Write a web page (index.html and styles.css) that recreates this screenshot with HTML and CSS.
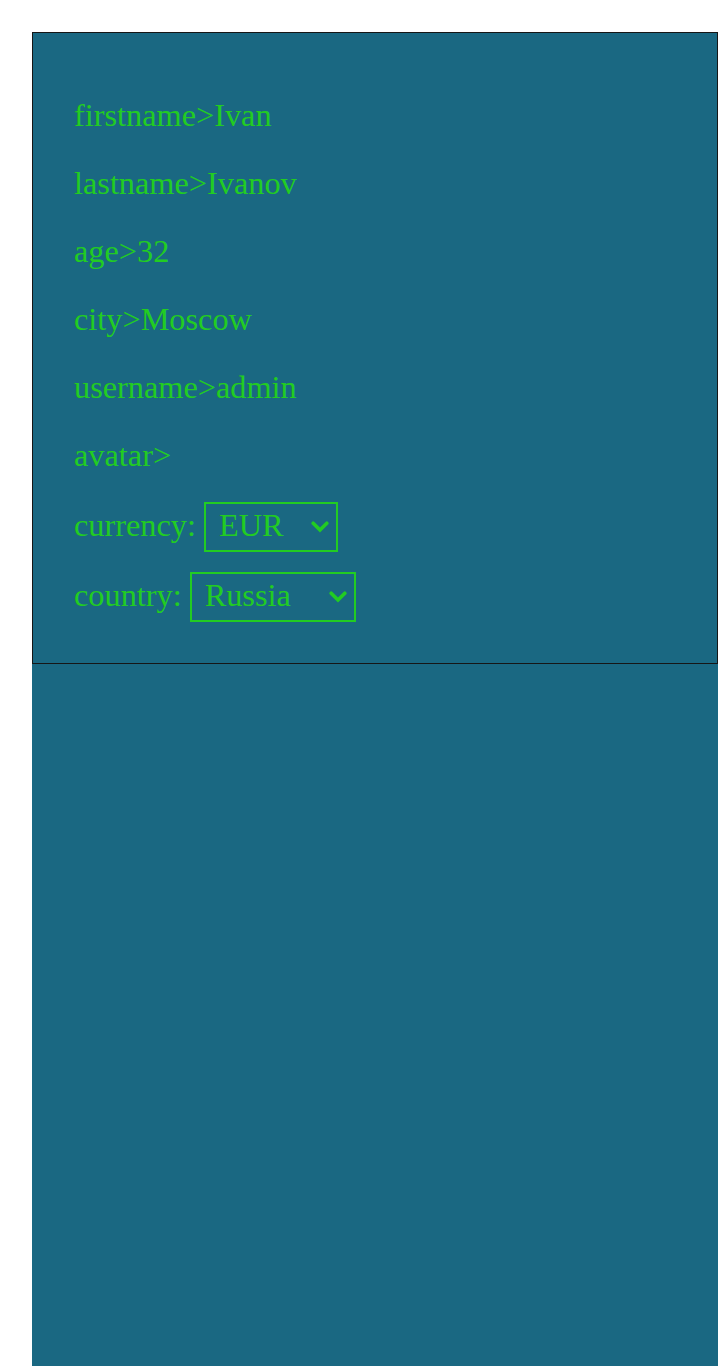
FILE: index.html
```html
<!DOCTYPE html>
<html lang="en">
<head>
<meta charset="utf-8">
<title>Profile</title>
<link rel="stylesheet" href="styles.css">
</head>
<body>
<div class="app">
  <div class="card">
    <p class="row">firstname&gt;Ivan</p>
    <p class="row">lastname&gt;Ivanov</p>
    <p class="row">age&gt;32</p>
    <p class="row">city&gt;Moscow</p>
    <p class="row">username&gt;admin</p>
    <p class="row">avatar&gt;</p>
    <div class="fields">
      <div class="field">
        <label class="label" for="currency">currency:</label>
        <span class="select-wrap currency">
          <select id="currency" class="select">
            <option>EUR</option>
            <option>RUB</option>
            <option>USD</option>
          </select>
          <svg class="chev" viewBox="0 0 18 12" width="18" height="12" aria-hidden="true"><path d="M2.2 2.2 L9 9 L15.8 2.2" fill="none" stroke="currentColor" stroke-width="3.6" stroke-linecap="round" stroke-linejoin="miter"/></svg>
        </span>
      </div>
      <div class="field">
        <label class="label" for="country">country:</label>
        <span class="select-wrap country">
          <select id="country" class="select">
            <option>Russia</option>
            <option>Belarus</option>
            <option>Ukraine</option>
          </select>
          <svg class="chev" viewBox="0 0 18 12" width="18" height="12" aria-hidden="true"><path d="M2.2 2.2 L9 9 L15.8 2.2" fill="none" stroke="currentColor" stroke-width="3.6" stroke-linecap="round" stroke-linejoin="miter"/></svg>
        </span>
      </div>
    </div>
  </div>
</div>
</body>
</html>
```
FILE: styles.css
```css
html, body {
  margin: 0;
  padding: 0;
  background: #ffffff;
}

.app {
  margin: 32px 0 0 32px;
  min-height: calc(100vh - 32px);
  background: #1a6882;
  font-family: "Liberation Serif", "Times New Roman", serif;
  color: #22cc22;
}

.card {
  border: 1px solid #161616;
  padding: 64px 40px 41px 41px;
  display: flex;
  flex-direction: column;
  gap: 32px;
}

.row {
  margin: 0;
  font-size: 32.3px;
  line-height: 36px;
}

.fields {
  display: flex;
  flex-direction: column;
  gap: 20px;
  margin-top: -3px;
}

.field {
  display: flex;
  align-items: center;
  gap: 8px;
  font-size: 32.3px;
  line-height: 36px;
}

.label {
  margin-top: -4px;
}

.select-wrap {
  position: relative;
  display: inline-flex;
  color: #22cc22;
}

.select {
  appearance: none;
  -webkit-appearance: none;
  background: transparent;
  color: #22cc22;
  border: 2px solid #22cc22;
  border-radius: 0;
  font-family: "Liberation Serif", "Times New Roman", serif;
  font-size: 32.3px;
  height: 50px;
  padding: 0 13px 4px 13px;
  margin: 0;
  outline: none;
}

.currency .select { width: 134px; }
.country .select { width: 166px; }

.chev {
  position: absolute;
  right: 9px;
  top: 19px;
  pointer-events: none;
}
```
